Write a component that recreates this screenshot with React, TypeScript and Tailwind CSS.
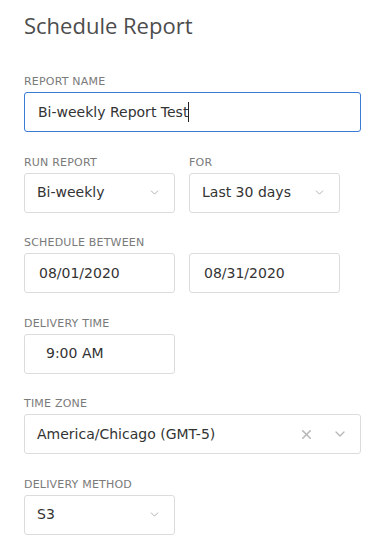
import { ChevronDown, X } from "lucide-react";

const labelClass =
  "block text-[11px] leading-[12px] tracking-[0.2px] uppercase text-[#7a7a7a] pt-[2px] mb-[4px]";
const boxClass =
  "h-[40px] flex items-center border rounded-[3px] bg-white text-[14px] text-[#333]";

function Select({ value, width }: { value: string; width: string }) {
  return (
    <div className={`${boxClass} border-[#dcdcdc] ${width} pl-[12px] pr-[13px] justify-between`}>
      <span>{value}</span>
      <ChevronDown size={13} strokeWidth={1.5} className="text-[#a0a0a0]" />
    </div>
  );
}

function Field({ value, width, indent = "pl-[14px]" }: { value: string; width: string; indent?: string }) {
  return (
    <div className={`${boxClass} border-[#dcdcdc] ${width} ${indent}`}>
      <span>{value}</span>
    </div>
  );
}

export default function App() {
  return (
    <div
      className="w-[373px] h-[559px] bg-white px-[24px] pt-[11px]"
      style={{ fontFamily: '"DejaVu Sans", Verdana, sans-serif' }}
    >
      <h1 className="text-[22px] leading-[28px] text-[#4d4d4d] font-['Open_Sans',sans-serif] mb-[35px]">
        Schedule Report
      </h1>

      {/* REPORT NAME */}
      <div className="mb-[22.5px]">
        <label className={labelClass}>Report Name</label>
        <div className={`${boxClass} border-[#3a7bd5] w-[337px] pl-[13px]`}>
          <span>Bi-weekly Report Test</span>
          <span className="w-px h-[20px] bg-[#222]" />
        </div>
      </div>

      {/* RUN REPORT / FOR */}
      <div className="flex gap-[14px] mb-[22.5px]">
        <div>
          <label className={labelClass}>Run Report</label>
          <Select value="Bi-weekly" width="w-[151px]" />
        </div>
        <div>
          <label className={labelClass}>For</label>
          <Select value="Last 30 days" width="w-[151px]" />
        </div>
      </div>

      {/* SCHEDULE BETWEEN */}
      <div className="mb-[22.5px]">
        <label className={labelClass}>Schedule Between</label>
        <div className="flex gap-[14px]">
          <Field value="08/01/2020" width="w-[151px]" />
          <Field value="08/31/2020" width="w-[151px]" />
        </div>
      </div>

      {/* DELIVERY TIME */}
      <div className="mb-[22.5px]">
        <label className={labelClass}>Delivery Time</label>
        <Field value="9:00 AM" width="w-[151px]" indent="pl-[21px]" />
      </div>

      {/* TIME ZONE */}
      <div className="mb-[22.5px]">
        <label className={labelClass}>Time Zone</label>
        <div className={`${boxClass} border-[#dcdcdc] w-[337px] pl-[12px] pr-[12px] justify-between`}>
          <span>America/Chicago (GMT-5)</span>
          <div className="flex items-center gap-[18px] text-[#b8b8b8]">
            <X size={15} strokeWidth={2.5} />
            <ChevronDown size={16} strokeWidth={2} />
          </div>
        </div>
      </div>

      {/* DELIVERY METHOD */}
      <div>
        <label className={labelClass}>Delivery Method</label>
        <Select value="S3" width="w-[151px]" />
      </div>
    </div>
  );
}
